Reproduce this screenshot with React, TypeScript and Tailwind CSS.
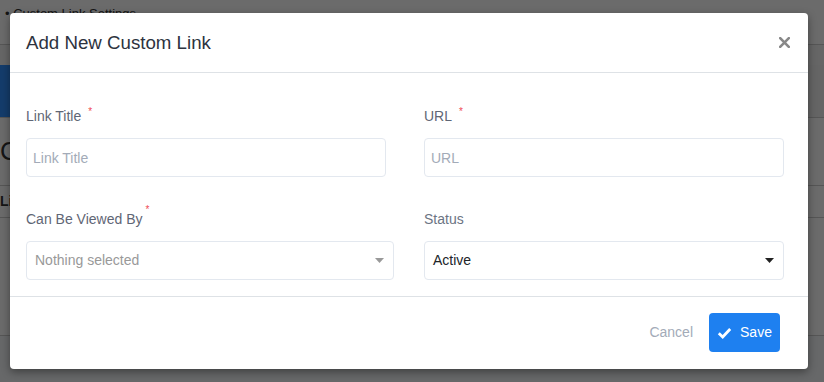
import { ChangeEvent, useState } from "react";

const font = { fontFamily: '"Liberation Sans", Arial, sans-serif' };

function Required({ raised }: { raised?: boolean }) {
  return (
    <span
      className={`text-[#ef4b55] text-[10px] leading-none relative ${
        raised ? "ml-[3px] -top-[9px]" : "ml-[7px] -top-[4px]"
      }`}
    >
      *
    </span>
  );
}

function Caret({ color }: { color: string }) {
  return (
    <svg width="9" height="5" viewBox="0 0 9 5" className="shrink-0">
      <path d="M0 0h9L4.5 5z" fill={color} />
    </svg>
  );
}

export default function App() {
  const [title, setTitle] = useState<string>("");
  const [url, setUrl] = useState<string>("");

  return (
    <div className="relative w-[824px] h-[382px] overflow-hidden bg-white" style={font}>
      {/* page behind the modal */}
      <div className="flex flex-col text-[#333]">
        <div className="h-[45px] border-b border-[#ccc] px-[5px] pt-[4px] text-[13px]">
          • Custom Link Settings
        </div>
        <div className="h-[20px] bg-[#f4f4f4]" />
        <div className="h-[53px] flex border-b border-[#ccc]">
          <div className="w-[220px] bg-[#3090ff]" />
          <div className="flex-1 bg-[#f0f0f0]" />
        </div>
        <div className="h-[67px] flex items-center text-[26px]">Custom Links</div>
        <div className="h-[33px] border-t border-b border-[#ccc] flex items-center text-[14px] font-bold">
          Link Title
        </div>
        <div className="h-[118px] border-b border-[#ccc]" />
        <div className="h-[46px] bg-[#f6f8fa]" />
      </div>

      {/* overlay */}
      <div className="absolute inset-0 bg-black/[0.58] pt-[13px] pl-[10px]">
        <div className="w-[798px] bg-white rounded-[4px] shadow-[0_3px_9px_rgba(0,0,0,0.4)]">
          <div className="h-[60px] flex items-center justify-between pl-[16px] pr-[18px] border-b border-[#dee2e6]">
            <h4 className="text-[18.7px] text-[#2d3340] leading-none pt-[1px]">Add New Custom Link</h4>
            <button aria-label="Close" className="w-[11px] h-[11px]">
              <svg width="11" height="11" viewBox="0 0 11 11">
                <path d="M1.2 1.2l8.6 8.6M9.8 1.2L1.2 9.8" stroke="#888" strokeWidth="2.6" strokeLinecap="square" />
              </svg>
            </button>
          </div>

          <div className="pl-[16px] pt-[33px] pb-[16px]">
            <div className="grid grid-cols-[368px_360px] gap-x-[30px]">
              <div>
                <label className="flex items-center h-[20px] text-[14px] text-[#5f6675]">
                  Link Title
                  <Required />
                </label>
                <input
                  value={title}
                  onChange={(e: ChangeEvent<HTMLInputElement>) => setTitle(e.target.value)}
                  placeholder="Link Title"
                  className="mt-[12px] w-[360px] h-[39px] border border-[#e3e8ef] rounded-[4px] px-[6px] text-[14px] text-[#333] placeholder:text-[#a3abb8] outline-none"
                />
              </div>
              <div>
                <label className="flex items-center h-[20px] text-[14px] text-[#5f6675]">
                  URL
                  <Required />
                </label>
                <input
                  value={url}
                  onChange={(e: ChangeEvent<HTMLInputElement>) => setUrl(e.target.value)}
                  placeholder="URL"
                  className="mt-[12px] w-[360px] h-[39px] border border-[#e3e8ef] rounded-[4px] px-[6px] text-[14px] text-[#333] placeholder:text-[#a3abb8] outline-none"
                />
              </div>

              <div className="mt-[32px]">
                <label className="flex items-center h-[20px] text-[14px] text-[#5f6675]">
                  Can Be Viewed By
                  <Required raised />
                </label>
                <div className="mt-[12px] w-[368px] h-[39px] border border-[#e3e8ef] rounded-[4px] pl-[8px] pr-[9px] flex items-center justify-between text-[14px] text-[#999]">
                  Nothing selected
                  <Caret color="#999" />
                </div>
              </div>
              <div className="mt-[32px]">
                <label className="flex items-center h-[20px] text-[14px] text-[#6c7483]">Status</label>
                <div className="mt-[12px] w-[360px] h-[39px] border border-[#e3e8ef] rounded-[4px] pl-[8px] pr-[9px] flex items-center justify-between text-[14px] text-[#212529]">
                  Active
                  <Caret color="#222" />
                </div>
              </div>
            </div>
          </div>

          <div className="border-t border-[#dee2e6] pt-[16px] pb-[17px] pr-[28px] flex items-center justify-end gap-[16px]">
            <button className="text-[14px] text-[#a3abb8]">Cancel</button>
            <button className="h-[39px] w-[71px] rounded-[4px] bg-[#1e80f0] text-white text-[14px] flex items-center justify-center gap-[8px]">
              <svg width="15" height="12" viewBox="0 0 15 12">
                <path d="M1.8 6.2l3.9 3.7L13.2 2" stroke="white" strokeWidth="2.8" fill="none" />
              </svg>
              Save
            </button>
          </div>
        </div>
      </div>
    </div>
  );
}
